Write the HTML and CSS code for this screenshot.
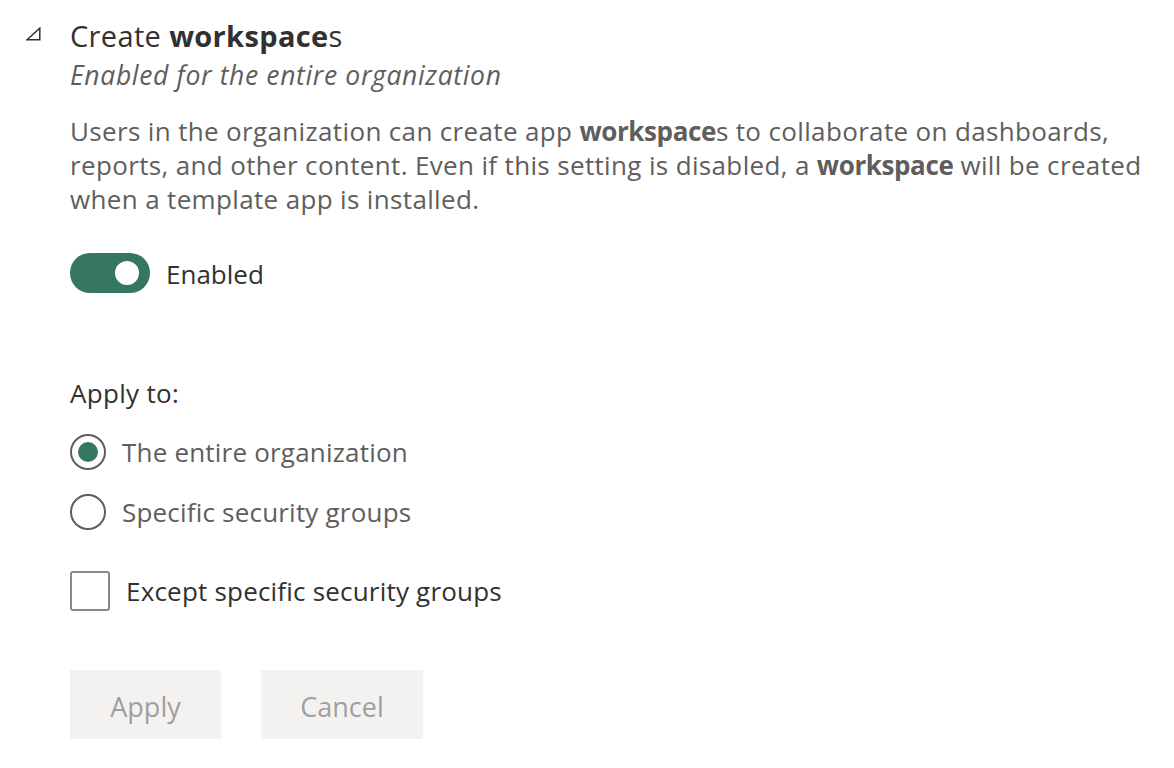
FILE: index.html
```html
<!DOCTYPE html>
<html>
<head>
<meta charset="utf-8">
<link rel="stylesheet" href="styles.css">
</head>
<body>
<div class="setting">
  <div class="header">
    <svg class="caret" width="15" height="14" viewBox="0 0 15 14"><path d="M13.8 1.2 L13.8 12.8 L1 12.8 Z" fill="none" stroke="#323130" stroke-width="1.5" stroke-linejoin="miter"/></svg>
    <div class="titles">
      <h1 class="title">Create <b>workspace</b>s</h1>
      <div class="subtitle">Enabled for the entire organization</div>
    </div>
  </div>
  <div class="body">
    <p class="desc">Users in the organization can create app <b>workspace</b>s to collaborate on dashboards,<br>reports, and other content. Even if this setting is disabled, a <b>workspace</b> will be created<br>when a template app is installed.</p>
    <div class="toggle-row">
      <span class="toggle"><span class="knob"></span></span>
      <span class="toggle-label">Enabled</span>
    </div>
    <div class="apply-label">Apply to:</div>
    <div class="radio-row">
      <span class="radio checked"><span class="dot"></span></span>
      <span class="radio-label">The entire organization</span>
    </div>
    <div class="radio-row">
      <span class="radio"></span>
      <span class="radio-label">Specific security groups</span>
    </div>
    <div class="check-row">
      <span class="checkbox"></span>
      <span class="check-label">Except specific security groups</span>
    </div>
    <div class="buttons">
      <button class="btn btn-apply">Apply</button>
      <button class="btn btn-cancel">Cancel</button>
    </div>
  </div>
</div>
</body>
</html>
```
FILE: styles.css
```css
html, body {
  margin: 0;
  padding: 0;
  background: #ffffff;
}
body {
  font-family: "Open Sans", "Noto Sans", sans-serif;
  color: #323130;
}
.setting {
  padding: 16px 0 0 26px;
}
.header {
  display: flex;
  align-items: flex-start;
}
.caret {
  margin-top: 11px;
  width: 15px;
  height: 14px;
  flex: none;
}
.titles {
  margin-left: 29px;
}
.title {
  margin: 0;
  font-size: 29px;
  letter-spacing: 0.35px;
  font-weight: 400;
  line-height: 40px;
  color: #323130;
}
.title b {
  font-weight: 700;
}
.subtitle {
  font-style: italic;
  font-size: 26.5px;
  letter-spacing: 0.65px;
  line-height: 38px;
  color: #605e5c;
}
.body {
  padding-left: 44px;
}
.desc {
  margin: 20px 0 0 0;
  font-size: 26px;
  letter-spacing: 0.35px;
  line-height: 34px;
  color: #605e5c;
}
.desc b {
  font-weight: 700;
  letter-spacing: -0.4px;
}
.toggle-row {
  display: flex;
  align-items: center;
  margin-top: 37px;
  height: 40px;
}
.toggle {
  width: 80px;
  height: 40px;
  border-radius: 20px;
  background: #367662;
  display: flex;
  align-items: center;
  justify-content: flex-end;
  box-sizing: border-box;
  padding-right: 11px;
}
.knob {
  width: 24px;
  height: 24px;
  border-radius: 50%;
  background: #ffffff;
}
.toggle-label {
  margin-left: 16px;
  font-size: 26px;
  line-height: 40px;
  padding-top: 2px;
  color: #323130;
}
.apply-label {
  margin-top: 82px;
  font-size: 26px;
  letter-spacing: 0.3px;
  line-height: 36px;
  color: #323130;
}
.radio-row {
  display: flex;
  align-items: center;
  height: 36px;
  margin-top: 23px;
}
.radio-row + .radio-row {
  margin-top: 24px;
}
.radio {
  width: 36px;
  height: 36px;
  box-sizing: border-box;
  border: 2px solid #605e5c;
  border-radius: 50%;
  display: flex;
  align-items: center;
  justify-content: center;
  flex: none;
}
.dot {
  width: 20px;
  height: 20px;
  border-radius: 50%;
  background: #367662;
}
.radio-label {
  margin-left: 16px;
  font-size: 26px;
  letter-spacing: 0.2px;
  color: #605e5c;
}
.check-row {
  display: flex;
  align-items: center;
  height: 40px;
  margin-top: 41px;
}
.checkbox {
  width: 40px;
  height: 40px;
  box-sizing: border-box;
  border: 2px solid #8a8886;
  border-radius: 3px;
  flex: none;
}
.check-label {
  margin-left: 16px;
  font-size: 26px;
  letter-spacing: 0.2px;
  color: #323130;
}
.buttons {
  display: flex;
  gap: 40px;
  margin-top: 59px;
}
.btn {
  height: 69px;
  border: none;
  background: #f3f2f1;
  color: #a19f9d;
  font-family: "Open Sans", "Noto Sans", sans-serif;
  font-size: 27px;
  padding: 4px 0 0 0;
}
.btn-apply {
  width: 151px;
}
.btn-cancel {
  width: 162px;
}
```
